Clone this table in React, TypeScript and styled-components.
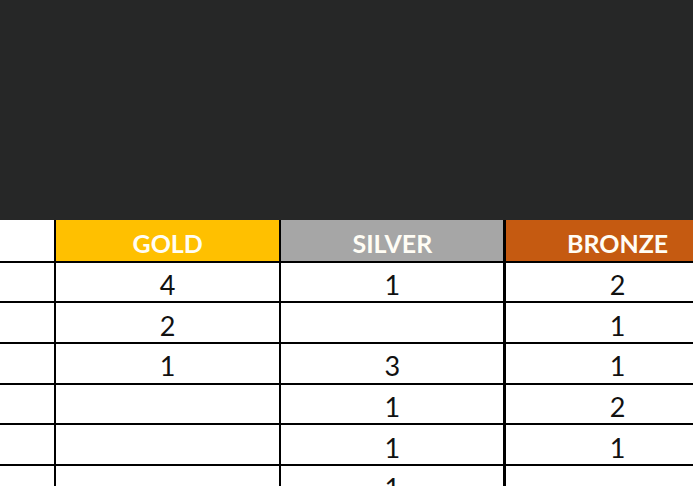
import * as React from 'react';
import styled, { createGlobalStyle } from 'styled-components';

const GlobalStyle = createGlobalStyle`
  html, body {
    margin: 0;
    padding: 0;
    background: #fff;
    overflow: hidden;
  }
`;

const medals = [
  { label: 'GOLD', color: '#ffc000' },
  { label: 'SILVER', color: '#a6a6a6' },
  { label: 'BRONZE', color: '#c55a11' },
];

const rows: (number | null)[][] = [
  [4, 1, 2],
  [2, null, 1],
  [1, 3, 1],
  [null, 1, 2],
  [null, 1, 1],
  [null, 1, null],
];

const App = () => (
  <Page>
    <GlobalStyle />
    <Banner />
    <Table>
      <BlankHead />
      {medals.map(m => (
        <HeadCell key={m.label} bg={m.color}>{m.label}</HeadCell>
      ))}
      {rows.map((row, i) => (
        <React.Fragment key={i}>
          <Cell />
          {row.map((v, j) => (
            <Cell key={j}>{v ?? ''}</Cell>
          ))}
        </React.Fragment>
      ))}
    </Table>
  </Page>
);

const Page = styled.div`
  width: 693px;
  height: 486px;
  overflow: hidden;
  display: flex;
  flex-direction: column;
  font-family: Lato, "Open Sans", sans-serif;
`;

const Banner = styled.div`
  height: 220px;
  flex-shrink: 0;
  background: #262727;
`;

const Table = styled.div`
  display: grid;
  grid-template-columns: 54px 223px 222px 224px;
  grid-template-rows: 40.5px;
  grid-auto-rows: 38.5px;
  gap: 2.2px;
  background: #000;
  width: max-content;
`;

const BlankHead = styled.div`
  background: #fff;
`;

const HeadCell = styled.div<{ bg: string }>`
  background: ${p => p.bg};
  color: #fffdf5;
  font-weight: 700;
  font-size: 25px;
  display: flex;
  align-items: center;
  justify-content: center;
  padding-top: 6px;
  box-sizing: border-box;
`;

const Cell = styled.div`
  background: #fff;
  color: #111;
  font-size: 27px;
  display: flex;
  align-items: center;
  justify-content: center;
  padding-top: 5px;
  box-sizing: border-box;
`;

export default App;
